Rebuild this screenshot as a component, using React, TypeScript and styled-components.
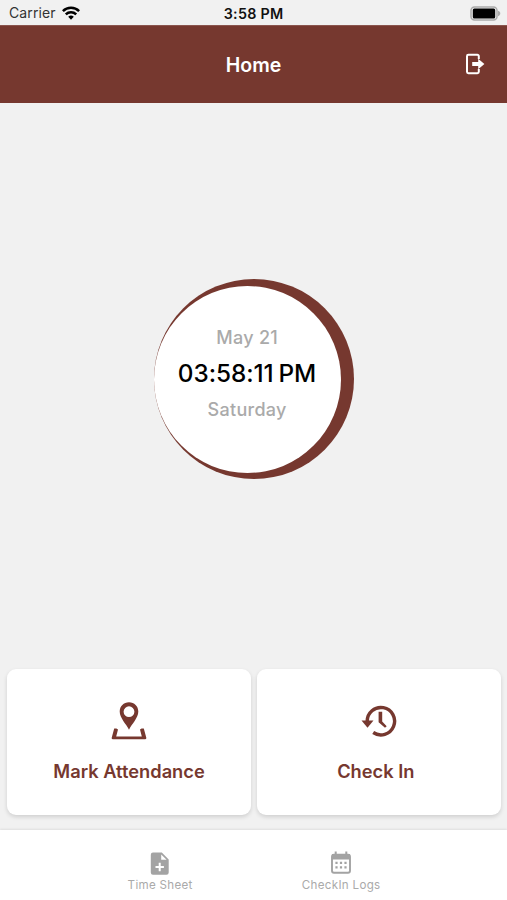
import React from "react";
import styled, { createGlobalStyle } from "styled-components";

const maroon = "#76382f";

const GlobalStyle = createGlobalStyle`
  * { box-sizing: border-box; }
  body { margin: 0; background: #f1f1f1; font-family: Inter, "Liberation Sans", sans-serif; }
  svg { display: block; }
`;

const Screen = styled.div`
  width: 507px;
  height: 900px;
  display: flex;
  flex-direction: column;
  background: #f1f1f1;
  overflow: hidden;
`;

const StatusBar = styled.div`
  height: 25px;
  flex: none;
  display: grid;
  grid-template-columns: 1fr auto 1fr;
  align-items: center;
  padding: 2px 6px 0 9px;
`;

const Carrier = styled.div`
  display: flex;
  align-items: center;
  gap: 6px;
`;

const Clock = styled.div`
  display: flex;
  margin-left: -3px;
`;

const Battery = styled.div`
  display: flex;
  justify-content: flex-end;
`;

const Label = styled.span<{ $size: number; $weight?: number; $color?: string; $spacing?: number }>`
  font-size: ${(p) => p.$size}px;
  font-weight: ${(p) => p.$weight ?? 400};
  color: ${(p) => p.$color ?? "#111"};
  letter-spacing: ${(p) => p.$spacing ?? 0}px;
  margin-right: ${(p) => -(p.$spacing ?? 0)}px;
  line-height: 1.2;
  white-space: nowrap;
`;

const Time = styled(Label)`
  word-spacing: -1.5px;
`;

const Header = styled.header`
  height: 78px;
  flex: none;
  display: grid;
  grid-template-columns: 1fr auto 1fr;
  align-items: center;
  padding: 0 22px;
  background: ${maroon};
  border-top: 1px solid #8a554e;
`;

const LogoutButton = styled.button`
  grid-column: 3;
  justify-self: end;
  padding: 0 0 2px;
  border: 0;
  background: none;
`;

const Title = styled.div`
  grid-column: 2;
  display: flex;
  padding-top: 2px;
`;

const Main = styled.main`
  flex: 1;
  display: flex;
  justify-content: center;
  padding-top: 176px;
`;

const Ring = styled.div`
  width: 200px;
  height: 200px;
  border-radius: 50%;
  background: ${maroon};
  display: flex;
  align-items: center;
`;

const Dial = styled.div`
  width: 187px;
  height: 187px;
  border-radius: 50%;
  background: #fff;
  display: flex;
  flex-direction: column;
  align-items: center;
  justify-content: center;
  gap: 10.5px;
  padding-bottom: 10px;
`;

const Actions = styled.div`
  flex: none;
  display: grid;
  grid-template-columns: repeat(2, minmax(0, 1fr));
  gap: 6.5px;
  padding: 0 6.5px 15px 7.4px;
`;

const Card = styled.button<{ $iconShift?: number }>`
  height: 146.5px;
  display: flex;
  flex-direction: column;
  align-items: center;
  gap: 20px;
  padding: 32px ${(p) => p.$iconShift ?? 0}px 0 0;
  border: 0;
  border-radius: 9px;
  background: #fff;
  box-shadow: 0 2px 4px rgba(0, 0, 0, 0.14);
  font-family: inherit;

  svg {
    margin-left: ${(p) => p.$iconShift ?? 0}px;
  }
`;

const TabBar = styled.nav`
  height: 70px;
  flex: none;
  display: flex;
  justify-content: center;
  padding-right: 6px;
  background: #fff;
  box-shadow: 0 -1px 2px rgba(0, 0, 0, 0.08);
`;

const Tab = styled.div`
  width: 181px;
  display: flex;
  flex-direction: column;
  align-items: center;
  gap: 3px;
  padding-top: 20px;
`;

const WifiIcon = () => (
  <svg width="18" height="14" viewBox="0 0 18 14" fill="none" stroke="#000" strokeWidth="2.5">
    <path d="M.9 5.2a11.5 11.5 0 0 1 16.2 0" />
    <path d="M3.8 8.3a7.4 7.4 0 0 1 10.4 0" />
    <path d="M9 13.7 6.2 10.8a4 4 0 0 1 5.6 0Z" fill="#000" stroke="none" />
  </svg>
);

const BatteryIcon = () => (
  <svg width="31" height="15" viewBox="0 0 31 15">
    <rect x="1" y="1" width="26" height="13" rx="3.5" fill="#f1f1f1" stroke="#aaa" strokeWidth="1.5" />
    <rect x="2.8" y="2.6" width="22.4" height="9.8" rx="1.5" fill="#000" />
    <path d="M28 4.8c3 .9 3 4.5 0 5.4Z" fill="#aaa" />
  </svg>
);

const LogoutIcon = () => (
  <svg width="20" height="22" viewBox="0 0 20 22" fill="none" stroke="#fff" strokeWidth="2">
    <path d="M13.8 5.9V3.2A1.4 1.4 0 0 0 12.4 1.8H3.4A1.4 1.4 0 0 0 2 3.2v15.6A1.4 1.4 0 0 0 3.4 20.2h9a1.4 1.4 0 0 0 1.4-1.4v-2.7" />
    <path d="M7.2 8.9h6V5.7l6.2 5.3-6.2 5.3v-3.2h-6Z" fill="#fff" stroke="none" />
  </svg>
);

const MapPinIcon = () => (
  <svg width="36" height="40" viewBox="0 0 36 40">
    <path
      d="M18 1.3c-5.3 0-9.3 4-9.3 9.3 0 6.5 6.5 12.5 9.3 18.2 2.8-5.7 9.3-11.7 9.3-18.2 0-5.3-4-9.3-9.3-9.3Zm0 4a5.4 5.4 0 1 1 0 10.8 5.4 5.4 0 0 1 0-10.8Z"
      fill={maroon}
      fillRule="evenodd"
    />
    <path d="M5.4 27.4H3.2L.7 36.8c-.2.8.3 1.4 1 1.4h32.6c.7 0 1.2-.6 1-1.4l-2.5-9.4h-2.2l-1.6 1 1.8 7H5.2l1.8-7-1.6-1Z" fill={maroon} />
  </svg>
);

const HistoryIcon = () => (
  <svg width="36" height="40" viewBox="0 0 36 40">
    <path d="M6.2 20.5A13.7 13.7 0 1 1 12.2 31.5" fill="none" stroke={maroon} strokeWidth="3.4" />
    <path d="M.5 19.6h12l-6 7.2Z" fill={maroon} />
    <path d="M17.6 10.7h3.6v9.8l4.5 4.7-1.7 1.6-6.4-5.6Z" fill={maroon} />
  </svg>
);

const TimeSheetIcon = () => (
  <svg width="20" height="26" viewBox="0 0 20 26">
    <path
      d="M3 2.5h8.8l6.9 6.9v13.2a2.2 2.2 0 0 1-2.2 2.2H3a2.2 2.2 0 0 1-2.2-2.2V4.7A2.2 2.2 0 0 1 3 2.5Zm8.2 1.9v5.4h5.4Z"
      fill="#a3a3a3"
      fillRule="evenodd"
    />
    <path d="M9.7 12.8v8.4M5.5 17h8.4" stroke="#fff" strokeWidth="2" />
  </svg>
);

const CalendarIcon = () => (
  <svg width="22" height="26" viewBox="0 0 22 26">
    <path d="M5.7 1.6v4M16.3 1.6v4" stroke="#a3a3a3" strokeWidth="2" />
    <rect x="2" y="4.8" width="18" height="18" rx="2" fill="#fff" stroke="#a3a3a3" strokeWidth="1.9" />
    <path d="M2 4h18v5.5H2Z" fill="#a3a3a3" />
    <path d="M5.4 12.9h11.2M5.4 17.4h11.2" stroke="#a3a3a3" strokeWidth="2.2" strokeDasharray="2.2 2.3" />
  </svg>
);

export default function App() {
  return (
    <Screen>
      <GlobalStyle />
      <StatusBar>
        <Carrier>
          <Label $size={14} $color="#333" $spacing={0.1}>Carrier</Label>
          <WifiIcon />
        </Carrier>
        <Clock><Label $size={14.3} $weight={600} $spacing={0.3}>3:58 PM</Label></Clock>
        <Battery><BatteryIcon /></Battery>
      </StatusBar>
      <Header>
        <Title><Label $size={19.5} $weight={600} $color="#fff">Home</Label></Title>
        <LogoutButton aria-label="Log out"><LogoutIcon /></LogoutButton>
      </Header>
      <Main>
        <Ring>
          <Dial>
            <Label $size={18} $weight={500} $color="#aaa" $spacing={0.3}>May 21</Label>
            <Time $size={24.3} $weight={500} $color="#000" $spacing={-0.05}>03:58:11 PM</Time>
            <Label $size={18} $weight={500} $color="#aaa" $spacing={0.3}>Saturday</Label>
          </Dial>
        </Ring>
      </Main>
      <Actions>
        <Card>
          <MapPinIcon />
          <Label $size={18.3} $weight={600} $color={maroon}>Mark Attendance</Label>
        </Card>
        <Card $iconShift={6}>
          <HistoryIcon />
          <Label $size={18.3} $weight={600} $color={maroon}>Check In</Label>
        </Card>
      </Actions>
      <TabBar>
        <Tab>
          <TimeSheetIcon />
          <Label $size={11.6} $color="#aaa" $spacing={0.3}>Time Sheet</Label>
        </Tab>
        <Tab>
          <CalendarIcon />
          <Label $size={11.6} $color="#aaa" $spacing={0.3}>CheckIn Logs</Label>
        </Tab>
      </TabBar>
    </Screen>
  );
}
